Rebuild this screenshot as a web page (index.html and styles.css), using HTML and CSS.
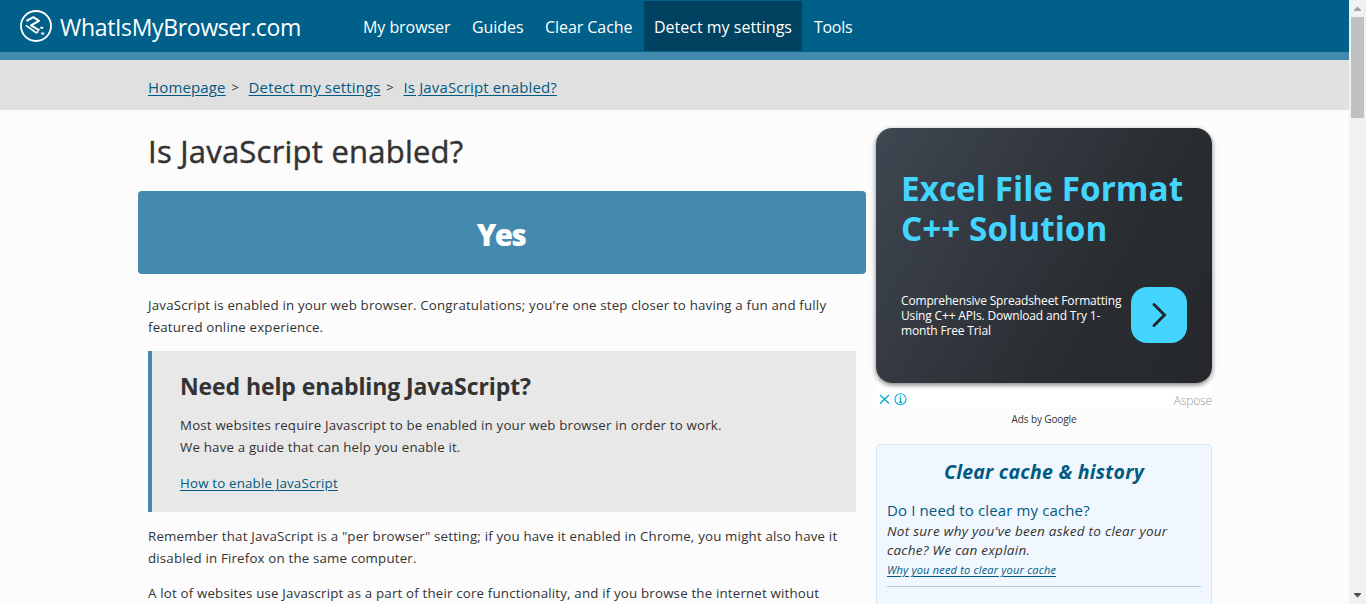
FILE: index.html
```html
<!DOCTYPE html>
<html lang="en">
<head>
<meta charset="utf-8">
<title>Is JavaScript enabled?</title>
<link rel="stylesheet" href="styles.css">
</head>
<body>
<div class="viewport">
  <div class="page">
    <header class="header">
      <a class="brand">
        <svg class="logo" viewBox="0 0 32 32" width="32" height="32">
          <circle cx="16" cy="16" r="15" fill="none" stroke="#fff" stroke-width="1.8"/>
          <g fill="none" stroke="#fff" stroke-width="2.1" stroke-linejoin="round">
            <path d="M6.4 11 13.4 7.2 19 10.8 11 15.4 19.4 20.4"/>
            <path d="M5.8 15.4 16.2 22.8 18.4 21.6" stroke-width="1.7"/>
          </g>
          <path d="M20.4 16.8h2.8v2h-2.8zM21.2 22.4h3v2h-3z" fill="#fff"/>
        </svg>
        <span class="brand-name">WhatIsMyBrowser.com</span>
      </a>
      <nav class="nav">
        <a class="n1">My browser</a>
        <a class="n2">Guides</a>
        <a class="n3">Clear Cache</a>
        <a class="n4 active">Detect my settings</a>
        <a class="n5">Tools</a>
      </nav>
    </header>
    <div class="crumbs">
      <a>Homepage</a><span class="sep">&gt;</span><a>Detect my settings</a><span class="sep">&gt;</span><a>Is JavaScript enabled?</a>
    </div>
    <div class="columns">
      <main class="main">
        <h1><span>Is JavaScript enabled?</span></h1>
        <div class="result"><span>Yes</span></div>
        <p class="lead">JavaScript is enabled in your web browser. Congratulations; you're one step closer to having a fun and fully<br>featured online experience.</p>
        <section class="help">
          <h2><span>Need help enabling JavaScript?</span></h2>
          <p>Most websites require Javascript to be enabled in your web browser in order to work.<br>We have a guide that can help you enable it.</p>
          <p><a>How to enable JavaScript</a></p>
        </section>
        <p>Remember that JavaScript is a "per browser" setting; if you have it enabled in Chrome, you might also have it<br>disabled in Firefox on the same computer.</p>
        <p>A lot of websites use Javascript as a part of their core functionality, and if you browse the internet without</p>
      </main>
      <aside class="side">
        <div class="ad">
          <div class="ad-card">
            <div class="ad-title">Excel File Format<br>C++ Solution</div>
            <div class="ad-row">
              <div class="ad-text">Comprehensive Spreadsheet Formatting<br>Using C++ APIs. Download and Try 1-<br>month Free Trial</div>
              <div class="ad-button">
                <svg viewBox="0 0 56 56" width="56" height="56"><path d="M23 17.5 33.5 28 23 38.5" fill="none" stroke="#24272b" stroke-width="3" stroke-linecap="round"/></svg>
              </div>
            </div>
          </div>
          <div class="ad-foot">
            <svg viewBox="0 0 32 16" width="32" height="16" fill="none" stroke="#00aecd">
              <path d="M4 4 13 12.5M13 4 4 12.5" stroke-width="1.4"/>
              <circle cx="24.5" cy="8.3" r="5.5" stroke-width="1.1"/>
              <path d="M23.2 7.2h1.4v4M23 11.4h3.2M24.5 4.6v1.2" stroke-width="1.2"/>
            </svg>
            <span class="advertiser">Aspose</span>
          </div>
        </div>
        <div class="ads-by"><span>Ads by Google</span></div>
        <section class="cache">
          <h3><span>Clear cache &amp; history</span></h3>
          <div class="question"><span>Do I need to clear my cache?</span></div>
          <div class="answer">Not sure why you've been asked to clear your<br>cache? We can explain.</div>
          <div class="why"><a>Why you need to clear your cache</a></div>
          <hr>
        </section>
      </aside>
    </div>
  </div>
  <div class="scrollbar">
    <svg viewBox="0 0 17 17" width="17" height="17"><path d="M5 11h7v-1l-3.5-3.5L5 10z" fill="#a3a3a3"/></svg>
    <div class="thumb"></div>
    <svg class="down" viewBox="0 0 17 17" width="17" height="17"><path d="M5 6h7v1l-3.5 3.5L5 7z" fill="#505050"/></svg>
  </div>
</div>
</body>
</html>
```
FILE: styles.css
```css
* { box-sizing: border-box; }
body { margin: 0; background: #fcfcfc; color: #333; font-family: "Open Sans", "Noto Sans", sans-serif; font-size: 13.3px; letter-spacing: .18px; line-height: 22px; overflow: hidden; }
.viewport { display: flex; height: 604px; overflow: hidden; white-space: nowrap; }
.page { width: 1349px; height: 604px; overflow: hidden; }
.header { display: flex; height: 60px; background: #00608a; border-bottom: 8px solid #448aae; color: #fff; }
.brand { display: flex; width: 353px; padding: 10px 0 0 20px; gap: 8px; }
.logo { flex: none; }
.brand-name { font-size: 23px; line-height: 35px; letter-spacing: -.33px; }
.nav { display: flex; padding-top: 1px; font-size: 16px; line-height: 52px; letter-spacing: -.06px; }
.nav a { height: 50px; padding-left: 10px; }
.n1 { width: 109px; }
.n2 { width: 73px; }
.n3 { width: 109px; }
.n4 { width: 158px; letter-spacing: 0; }
.n5 { margin-left: 2px; letter-spacing: -.3px; }
.active { background: #00425f; }
.crumbs { display: flex; height: 50px; padding: 15px 0 0 148px; background: #e0e0e0; font-size: 15px; line-height: 24px; letter-spacing: .15px; }
a { color: inherit; }
.crumbs a, .help a, .why a { color: #005a82; text-decoration: underline; text-underline-offset: 2px; }
.sep { font-size: 13px; padding: 0 9.6px 0 5.7px; }
.columns { display: flex; gap: 10px; padding-left: 138px; }
.main { width: 728px; padding-top: 18px; }
h1 { margin: 0 10px; height: 63px; font-size: 31px; line-height: 47px; font-weight: 400; letter-spacing: .23px; -webkit-text-stroke: .45px #333; }
.result { height: 83px; padding-right: 2px; border-radius: 4px; background: #448aae; color: #fff; text-align: center; font-size: 29.5px; line-height: 88px; font-weight: 800; letter-spacing: -1.6px; }
.main p { margin: 0 10px 13px; }
.main .lead { margin-top: 20px; }
.help { height: 161px; margin: 0 10px 13px; padding: 19px 28px; border-left: 4px solid #448aae; background: #e8e8e8; }
.help h2 { margin: 0 0 12px; font-size: 23px; line-height: 32px; font-weight: 700; letter-spacing: -.1px; }
.main .help p { margin: 0 0 14px; }
.side { width: 336px; padding-top: 18px; }
.ad { height: 280px; background: #fff; }
.ad-card { height: 255px; padding: 40px 25px 0; border-radius: 16px; background: linear-gradient(120deg, #3d4851 0%, #393f49 18%, #292d31 65%, #25272b 100%); box-shadow: 0 2px 5px rgba(0,0,0,.5); }
.ad-title { color: #44d5ff; font-size: 33.3px; line-height: 40px; font-weight: 700; letter-spacing: .03px; }
.ad-row { display: flex; justify-content: space-between; margin-top: 39px; }
.ad-text { color: #fff; font-size: 12px; line-height: 15px; padding-top: 6px; letter-spacing: -.16px; }
.ad-button { flex: none; width: 56px; height: 56px; border-radius: 16px; background: #44d5ff; }
.ad-foot { display: flex; justify-content: space-between; padding-top: 8px; height: 25px; }
.advertiser { color: #999; font-weight: 300; font-size: 12px; line-height: 19px; letter-spacing: -.15px; }
.ads-by { height: 36px; text-align: center; font-size: 10px; line-height: 23px; letter-spacing: -.12px; }
.cache { height: 200px; padding: 9px 10px; border: 1px solid #d5e7f1; border-radius: 4px; background: #f0f7ff; }
h3 { margin: 0; height: 43px; color: #005a82; text-align: center; font-style: italic; font-size: 19.5px; line-height: 36px; font-weight: 700; letter-spacing: .24px; }
.question { padding-top: 1px; color: #005a82; font-size: 15px; line-height: 24px; letter-spacing: .13px; }
.answer { font-style: italic; font-size: 13.5px; line-height: 19px; letter-spacing: .28px; }
.why { font-style: italic; font-size: 11px; line-height: 20px; letter-spacing: .2px; }
.cache hr { margin: 6px 0 0; border: 0; border-top: 1px solid #aecbd7; }
.scrollbar { display: flex; flex-direction: column; width: 17px; background: #f1f1f1; }
.thumb { width: 13px; height: 101px; margin-left: 2px; background: #c1c1c1; }
.down { margin-top: auto; }
```
